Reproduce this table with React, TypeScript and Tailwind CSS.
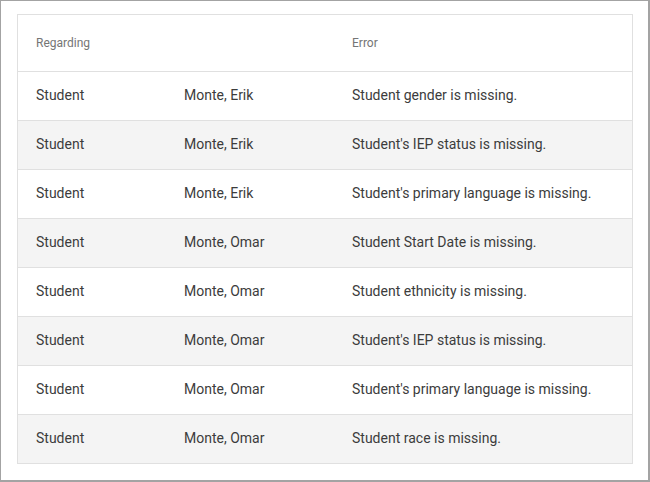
const rows = [
  { regarding: "Student", name: "Monte, Erik", error: "Student gender is missing." },
  { regarding: "Student", name: "Monte, Erik", error: "Student's IEP status is missing." },
  { regarding: "Student", name: "Monte, Erik", error: "Student's primary language is missing." },
  { regarding: "Student", name: "Monte, Omar", error: "Student Start Date is missing." },
  { regarding: "Student", name: "Monte, Omar", error: "Student ethnicity is missing." },
  { regarding: "Student", name: "Monte, Omar", error: "Student's IEP status is missing." },
  { regarding: "Student", name: "Monte, Omar", error: "Student's primary language is missing." },
  { regarding: "Student", name: "Monte, Omar", error: "Student race is missing." },
];

export default function App() {
  return (
    <div className="w-[650px] h-[482px] bg-white border-l border-t border-r-2 border-b-2 border-[#a3a3a3] pl-4 pt-[13px] font-['Roboto',sans-serif] overflow-hidden">
      <div className="w-[616px] border border-[#e0e0e0] bg-white">
        {/* header */}
        <div className="flex h-[56px] items-center text-[12px] text-[#757575]">
          <div className="w-[166px] pl-[18px]">Regarding</div>
          <div className="w-[168px]"></div>
          <div className="flex-1">Error</div>
        </div>

        {rows.map((r, i) => (
          <div
            key={i}
            className={
              "flex h-[49px] items-center pb-[2px] border-t border-[#e0e0e0] text-[14px] text-[#3c3c3c] " +
              (i % 2 === 1 ? "bg-[#f4f4f4]" : "bg-white")
            }
          >
            <div className="w-[166px] pl-[18px]">{r.regarding}</div>
            <div className="w-[168px]">{r.name}</div>
            <div className="flex-1">{r.error}</div>
          </div>
        ))}
      </div>
    </div>
  );
}
